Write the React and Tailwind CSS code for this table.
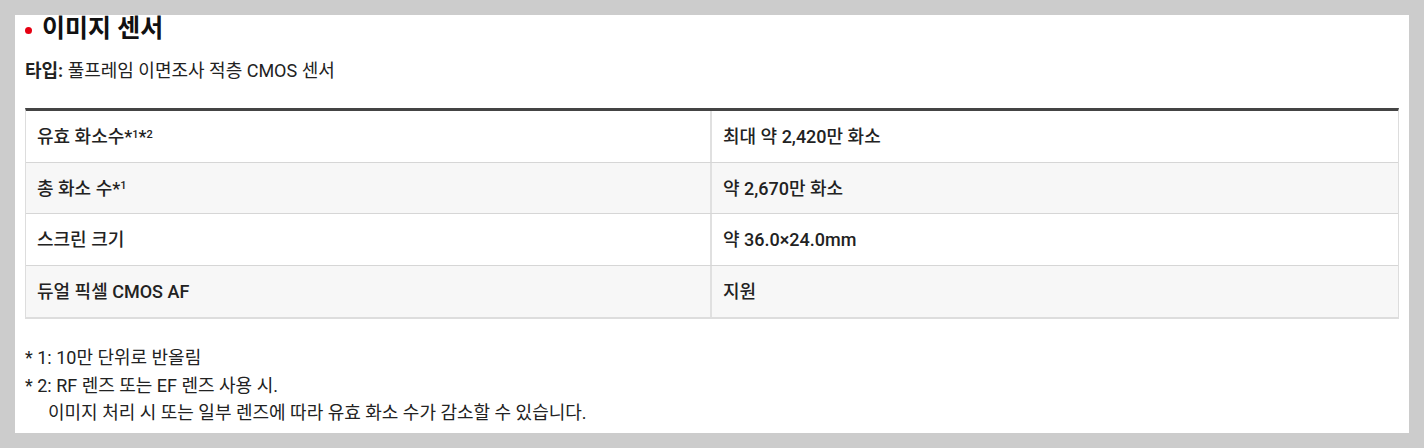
import React from "react";

const rows = [
  { label: "유효 화소수", sup: ["1", "2"], value: "최대 약 2,420만 화소" },
  { label: "총 화소 수", sup: ["1"], value: "약 2,670만 화소" },
  { label: "스크린 크기", sup: [], value: "약 36.0×24.0mm" },
  { label: "듀얼 픽셀 CMOS AF", sup: [], value: "지원" },
];

export default function App() {
  return (
    <div
      className="w-[1424px] h-[448px] bg-[#cccccc] p-[15px] text-[#222]"
      style={{ fontFamily: "Roboto, 'Noto Sans CJK KR', sans-serif" }}
    >
      <div className="h-[418px] bg-white px-[10px] flex flex-col">
        {/* Title */}
        <div className="flex items-center h-[28px]">
          <span className="w-[7px] h-[7px] rounded-full bg-[#e60012] mr-[10px] mt-[2px]" />
          <h2 className="text-[25px] leading-[28px] font-bold text-[#111]">이미지 센서</h2>
        </div>

        <p className="mt-[15px] text-[18px] leading-[26px]">
          <span className="font-bold">타입:</span> 풀프레임 이면조사 적층 CMOS 센서
        </p>

        {/* Spec table */}
        <div className="mt-[24px] border-t-[3px] border-t-[#444] border-x border-x-[#ddd] border-b-2 border-b-[#ddd]">
          {rows.map((row, i) => (
            <div
              key={row.label}
              className={
                "grid grid-cols-2 h-[51.5px] text-[18px] leading-[26px] font-medium " +
                (i % 2 === 1 ? "bg-[#f7f7f7] " : "bg-white ") +
                (i < rows.length - 1 ? "border-b border-[#d6d6d6]" : "")
              }
            >
              <div className="flex items-center pl-[11px] pt-[2px] border-r-2 border-[#e0e0e0]">
                <span>
                  {row.label}
                  {row.sup.map((s) => (
                    <span key={s}>
                      *<sup className="text-[11px]">{s}</sup>
                    </span>
                  ))}
                </span>
              </div>
              <div className="flex items-center pl-[11px] pt-[2px]">{row.value}</div>
            </div>
          ))}
        </div>

        {/* Notes */}
        <div className="mt-[25px] text-[18px] leading-[27.5px]">
          <p>* 1: 10만 단위로 반올림</p>
          <p>* 2: RF 렌즈 또는 EF 렌즈 사용 시.</p>
          <p className="pl-[23px]">이미지 처리 시 또는 일부 렌즈에 따라 유효 화소 수가 감소할 수 있습니다.</p>
        </div>
      </div>
    </div>
  );
}
